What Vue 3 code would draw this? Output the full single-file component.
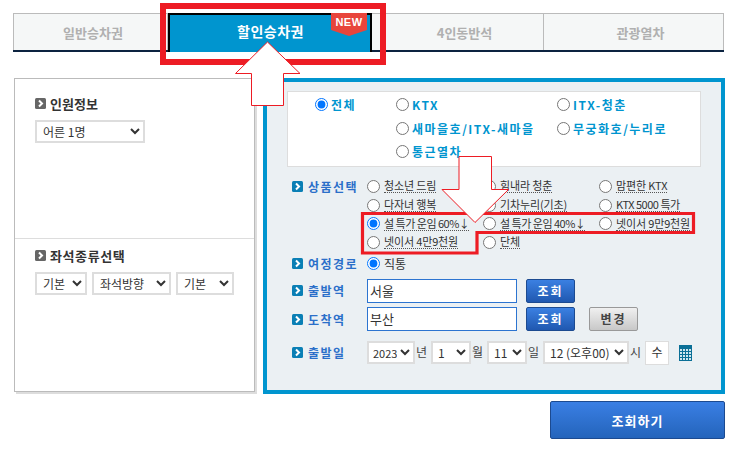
<script setup>
const trains = [
  { name: '전체', checked: true, col: 1 },
  { name: 'KTX', col: 2 },
  { name: 'ITX-청춘', col: 3 },
  { name: '새마을호/ITX-새마을', col: 2 },
  { name: '무궁화호/누리로', col: 3 },
  { name: '통근열차', col: 2 }
]
const products = [
  { name: '청소년 드림' }, { name: '힘내라 청춘' }, { name: '맘편한 KTX' },
  { name: '다자녀 행복' }, { name: '기차누리(기초)' }, { name: 'KTX 5000 특가', tight: true },
  { name: '설 특가 운임 60%↓', tight: true, checked: true }, { name: '설 특가 운임 40%↓', tight: true }, { name: '넷이서 9만9천원' },
  { name: '넷이서 4만9천원' }, { name: '단체' }
]
const calendarCells = []
for (let y = 0; y < 4; y++) for (let x = 0; x < 4; x++) calendarCells.push({ x: 1 + x * 3, y: 4 + y * 3 })
</script>

<template>
  <div class="page">
    <nav class="tabs">
      <div class="tab first">일반승차권</div>
      <div class="tab active">
        할인승차권
        <span class="new">NEW</span>
      </div>
      <div class="tab third">4인동반석</div>
      <div class="tab fourth">관광열차</div>
    </nav>

    <main class="main">
      <aside class="side">
        <section class="side-top">
          <h3 class="side-title"><svg class="bullet" viewBox="0 0 11 11"><rect width="11" height="11" rx="1.5" fill="#666"/><path d="M4 2.5 7 5.5 4 8.5" fill="none" stroke="#fff" stroke-width="2"/></svg>인원정보</h3>
          <select class="sel adult"><option>어른 1명</option></select>
        </section>
        <section class="side-bottom">
          <h3 class="side-title wide"><svg class="bullet" viewBox="0 0 11 11"><rect width="11" height="11" rx="1.5" fill="#666"/><path d="M4 2.5 7 5.5 4 8.5" fill="none" stroke="#fff" stroke-width="2"/></svg>좌석종류선택</h3>
          <div class="seat-row">
            <select class="sel s1"><option>기본</option></select>
            <select class="sel s2"><option>좌석방향</option></select>
            <select class="sel s3"><option>기본</option></select>
          </div>
        </section>
      </aside>

      <section class="panel">
        <div class="train-box">
          <label v-for="t in trains" :key="t.name" class="train" :class="'col' + t.col">
            <input type="radio" name="train" :checked="t.checked" />{{ t.name }}
          </label>
        </div>

        <div class="row products-row">
          <div class="row-label"><svg class="bullet" viewBox="0 0 11 11"><rect width="11" height="11" rx="1.5" fill="#0a7fb5"/><path d="M4 2.5 7 5.5 4 8.5" fill="none" stroke="#fff" stroke-width="2"/></svg>상품선택</div>
          <div class="products">
            <label v-for="p in products" :key="p.name" class="product" :class="{ tight: p.tight }">
              <input type="radio" name="product" :checked="p.checked" /><span>{{ p.name }}</span>
            </label>
          </div>
        </div>

        <div class="row route-row">
          <div class="row-label"><svg class="bullet" viewBox="0 0 11 11"><rect width="11" height="11" rx="1.5" fill="#0a7fb5"/><path d="M4 2.5 7 5.5 4 8.5" fill="none" stroke="#fff" stroke-width="2"/></svg>여정경로</div>
          <label class="direct"><input type="radio" name="route" checked />직통</label>
        </div>

        <div class="row station from">
          <div class="row-label"><svg class="bullet" viewBox="0 0 11 11"><rect width="11" height="11" rx="1.5" fill="#0a7fb5"/><path d="M4 2.5 7 5.5 4 8.5" fill="none" stroke="#fff" stroke-width="2"/></svg>출발역</div>
          <input class="station-input" value="서울" />
          <button class="btn blue">조회</button>
        </div>

        <div class="row station to">
          <div class="row-label"><svg class="bullet" viewBox="0 0 11 11"><rect width="11" height="11" rx="1.5" fill="#0a7fb5"/><path d="M4 2.5 7 5.5 4 8.5" fill="none" stroke="#fff" stroke-width="2"/></svg>도착역</div>
          <input class="station-input" value="부산" />
          <button class="btn blue">조회</button>
          <button class="btn gray">변경</button>
        </div>

        <div class="row date-row">
          <div class="row-label"><svg class="bullet" viewBox="0 0 11 11"><rect width="11" height="11" rx="1.5" fill="#0a7fb5"/><path d="M4 2.5 7 5.5 4 8.5" fill="none" stroke="#fff" stroke-width="2"/></svg>출발일</div>
          <select class="sel d-year"><option>2023</option></select><span class="unit">년</span>
          <select class="sel d-month"><option>1</option></select><span class="unit">월</span>
          <select class="sel d-month"><option>11</option></select><span class="unit">일</span>
          <select class="sel d-hour"><option>12 (오후00)</option></select><span class="unit">시</span>
          <div class="weekday">수</div>
          <svg class="calendar" viewBox="0 0 13 16">
            <rect width="13" height="16" fill="#0a6f96"/>
            <rect v-for="(c, i) in calendarCells" :key="i" :x="c.x" :y="c.y" width="2" height="2" fill="#cfe6ee"/>
          </svg>
        </div>
      </section>
    </main>

    <div class="submit-wrap"><button class="submit">조회하기</button></div>

    <svg class="overlay" viewBox="0 0 735 456" width="735" height="456">
      <rect x="163" y="6" width="220" height="56" fill="none" stroke="#ed1c24" stroke-width="6"/>
      <path d="M362.5 213.5H693.5V232.5H477V253H362.5Z" fill="none" stroke="#ed1c24" stroke-width="3.2"/>
      <path d="M267.5 42 300 73.5H283.5V105.5H251.5V73.5H235.5Z" fill="#fff" stroke="#ed1c24" stroke-width="1"/>
      <path d="M459 156.5H491.5V189.5H508.5L475 222.5 442 189.5H459Z" fill="#fff" stroke="#ed1c24" stroke-width="1"/>
    </svg>
  </div>
</template>

<style>
body { margin: 0; background: #fff; }
</style>

<style scoped>
.page {
  position: relative;
  width: 735px;
  height: 456px;
  box-sizing: border-box;
  padding-top: 13px;
  overflow: hidden;
  font-family: "Noto Sans CJK KR", "Noto Sans", sans-serif;
  font-size: 12px;
  color: #333;
}
.tabs {
  display: flex;
  margin-left: 13px;
  width: 711px;
  height: 39px;
  box-sizing: border-box;
  border-bottom: 2px solid #0c2340;
}
.tab {
  position: relative;
  box-sizing: border-box;
  height: 37px;
  background: #f5f7f7;
  border: 1px solid #bbb;
  border-bottom: 0;
  border-left-width: 0;
  color: #b0b0b0;
  font-weight: 700;
  font-size: 13px;
  display: flex;
  align-items: center;
  justify-content: center;
}
.first { width: 155px; border-left-width: 1px; padding-left: 5px; }
.third { width: 172px; padding-left: 14px; }
.fourth { width: 180px; padding-left: 14px; }
.active {
  width: 204px;
  height: 39px;
  background: #0095cf;
  border: 2px solid #000;
  border-bottom: 0;
  color: #fff;
  font-size: 14px;
  letter-spacing: 0.5px;
  padding: 0 0 5px 1px;
}
.new {
  position: absolute;
  top: -2px;
  left: 161px;
  width: 36px;
  height: 23px;
  padding-top: 2px;
  box-sizing: border-box;
  background: #e8453c;
  clip-path: polygon(0 0, 100% 0, 100% 74%, 50% 100%, 0 74%);
  color: #fff;
  font-family: "Liberation Sans", sans-serif;
  font-size: 11px;
  font-weight: 700;
  line-height: 14px;
  text-align: center;
}
.main {
  display: flex;
  margin: 26px 0 0 14px;
  align-items: flex-start;
}
.side {
  width: 241px;
  height: 314px;
  box-sizing: border-box;
  border: 1px solid #bbb;
  box-shadow: 2px 2px 0 #ddd;
  flex: none;
}
.side-top { height: 160px; box-sizing: border-box; padding: 17px 0 0 20px; border-bottom: 1px solid #ddd; }
.side-bottom { padding: 9px 0 0 20px; }
.side-title {
  display: flex;
  align-items: center;
  margin: 0 0 10px;
  height: 14px;
  font-size: 13px;
  font-weight: 700;
  color: #333;
}
.wide { letter-spacing: 0.6px; }
.bullet { width: 11px; height: 11px; margin-right: 4px; flex: none; }
.row-label .bullet { margin-right: 5px; }
.sel {
  box-sizing: border-box;
  height: 23px;
  border: 2px solid #ddd;
  background: #fff;
  font-family: inherit;
  font-size: 12px;
  color: #333;
  padding: 0 0 0 2px;
  margin: 0;
  border-radius: 0;
}
.adult { width: 110px; }
.seat-row { display: flex; gap: 5px; }
.s1 { width: 52px; }
.s2 { width: 79px; }
.s3 { width: 58px; }

.panel {
  margin-left: 8px;
  width: 462px;
  height: 316px;
  box-sizing: border-box;
  border: 4px solid #0095cf;
  background: #ebf0f3;
  padding: 9px 0 0 20px;
  flex: none;
}
.train-box {
  width: 414px;
  height: 76px;
  box-sizing: border-box;
  border: 1px solid #ddd;
  background: #fff;
  padding: 1px 0 0 27px;
  display: grid;
  grid-template-columns: 81px 161px 1fr;
  grid-auto-rows: 23.5px;
}
.train {
  display: flex;
  align-items: center;
  gap: 3px;
  font-size: 12px;
  font-weight: 700;
  letter-spacing: 1.5px;
  color: #0095cf;
  white-space: nowrap;
}
.train input, .product input, .direct input { margin: 0; flex: none; }
.col2 { grid-column: 2; }
.col3 { grid-column: 3; }
.row { display: flex; align-items: center; padding-left: 5px; }
.row-label {
  display: flex;
  align-items: center;
  width: 75px;
  flex: none;
  font-size: 12px;
  font-weight: 700;
  letter-spacing: 1.5px;
  color: #2b6fc9;
  white-space: nowrap;
}
.products-row { align-items: flex-start; margin-top: 10px; }
.products-row .row-label { height: 19px; }
.products {
  display: grid;
  grid-template-columns: repeat(3, 116px);
  grid-auto-rows: 18.7px;
}
.product {
  display: flex;
  align-items: center;
  gap: 4px;
  font-size: 11px;
  color: #333;
  white-space: nowrap;
}
.product span { border-bottom: 1px dotted #555; line-height: 13px; letter-spacing: -0.15px; }
.product.tight span { letter-spacing: -0.5px; }
.route-row { margin-top: 2px; height: 19px; }
.direct { display: flex; align-items: center; gap: 4px; }
.station { height: 24px; }
.from { margin-top: 6px; }
.to { margin-top: 4px; }
.to .row-label { padding-top: 1px; }
.station-input {
  box-sizing: border-box;
  width: 150px;
  height: 24px;
  border: 1px solid #2c74d0;
  background: #fff;
  padding: 0 2px;
  margin: 0;
  font-family: inherit;
  font-size: 13px;
  color: #333;
  outline: 0;
  border-radius: 0;
}
.btn {
  box-sizing: border-box;
  width: 49px;
  height: 24px;
  border-radius: 2px;
  font-family: inherit;
  font-size: 12px;
  font-weight: 700;
  letter-spacing: 2px;
  padding: 0;
  margin: 0;
}
.blue {
  margin-left: 9px;
  border: 1px solid #1c4a90;
  background: linear-gradient(#3b80e2, #2058b0);
  color: #fff;
}
.gray {
  margin-left: 14px;
  border: 1px solid #999;
  background: linear-gradient(#f0f0f0, #c8c8c8);
  color: #444;
}
.date-row { margin-top: 10px; height: 24px; }
.d-year { width: 48px; padding: 0; font-size: 11px; }
.d-month { width: 40px; padding-left: 1px; }
.d-hour { width: 86px; padding-left: 1px; }
.unit { width: 16px; flex: none; text-align: left; padding-left: 1px; box-sizing: border-box; font-size: 12px; color: #444; margin-top: -3px; }
.weekday {
  box-sizing: border-box;
  width: 24px;
  height: 24px;
  border: 1px solid #ddd;
  background: #fff;
  font-size: 12px;
  line-height: 20px;
  text-align: center;
}
.calendar { width: 13px; height: 16px; margin-left: 10px; }
.submit-wrap { display: flex; justify-content: flex-end; padding-right: 10px; margin-top: 7px; }
.submit {
  width: 175px;
  height: 38px;
  box-sizing: border-box;
  border: 1px solid #1c4a90;
  border-radius: 2px;
  background: linear-gradient(#3a7fe4, #2464bb);
  color: #fff;
  font-family: inherit;
  font-size: 13px;
  font-weight: 700;
  letter-spacing: 1px;
}
.overlay { position: absolute; left: 0; top: 0; pointer-events: none; }
</style>
